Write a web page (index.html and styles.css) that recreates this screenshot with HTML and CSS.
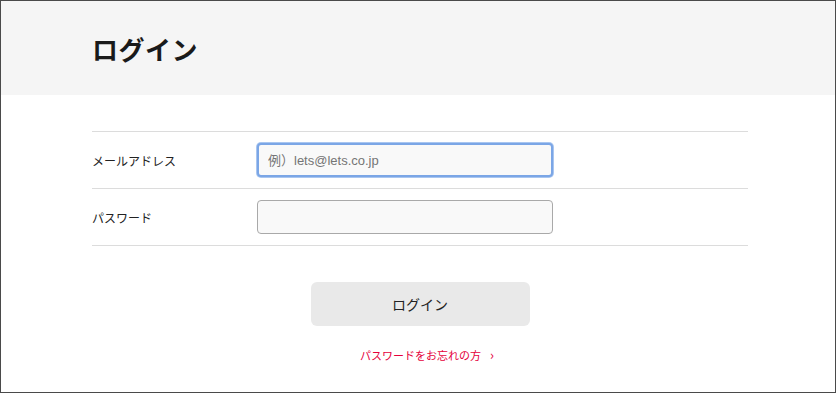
FILE: index.html
```html
<!DOCTYPE html>
<html lang="ja">
<head>
    <meta charset="UTF-8">
    <meta name="viewport" content="width=device-width, initial-scale=1.0">
    <title>ログイン</title>
    <link rel="stylesheet" href="styles.css">
</head>
<body>
    <div class="frame">
        <div class="page-head">
            <h1 class="page-title">ログイン</h1>
        </div>

        <form class="login">
            <div class="row">
                <label class="label" for="mail">メールアドレス</label>
                <input class="field is-focus" type="text" id="mail" placeholder="例）lets@lets.co.jp">
            </div>
            <div class="row">
                <label class="label" for="pass">パスワード</label>
                <input class="field" type="password" id="pass">
            </div>

            <div class="actions">
                <button type="button" class="btn-login">ログイン</button>
                <a class="forgot" href="#">パスワードをお忘れの方<span class="chev">›</span></a>
            </div>
        </form>
    </div>
</body>
</html>
```

FILE: styles.css
```css
html, body
{
    margin: 0;
    padding: 0;
}
body
{
    font-family: "Liberation Sans", "Noto Sans CJK JP", sans-serif;
    color: #222;
    background-color: #fff;
}
.frame
{
    box-sizing: border-box;
    width: 836px;
    height: 393px;
    border: 1px solid #4a4a4a;
    overflow: hidden;
}

/* 見出し */
.page-head
{
    background-color: #f5f5f5;
    height: 94px;
    padding-left: 91px;
    display: flex;
    align-items: center;
}
.page-title
{
    margin: 0;
    font-family: "Noto Sans CJK JP", sans-serif;
    font-size: 26px;
    font-weight: 700;
    color: #1a1a1a;
    letter-spacing: 0.5px;
}

/* フォーム */
.login
{
    width: 656px;
    margin: 36px 0 0 91px;
    border-top: 1px solid #dcdcdc;
}
.row
{
    display: flex;
    align-items: center;
    height: 56px;
    border-bottom: 1px solid #dcdcdc;
}
.label
{
    width: 165px;
    font-family: "Noto Sans CJK JP", sans-serif;
    font-size: 12px;
    color: #222;
}
.field
{
    box-sizing: border-box;
    width: 296px;
    height: 34px;
    padding: 0 10px;
    border: 1px solid #a9a9a9;
    border-radius: 4px;
    background-color: #f9f9f9;
    font-family: "Liberation Sans", "Noto Sans CJK JP", sans-serif;
    font-size: 13px;
    color: #222;
    outline: none;
}
.field::placeholder
{
    color: #757575;
}
.field.is-focus
{
    border: 2px solid #7ba6e6;
    box-shadow: 0 0 0 1px #a9c6f0;
    padding-left: 9px;
}

.actions
{
    display: flex;
    flex-direction: column;
    align-items: center;
    padding-top: 36px;
}
.btn-login
{
    width: 219px;
    height: 44px;
    border: none;
    border-radius: 6px;
    background-color: #e9e9e9;
    font-family: "Noto Sans CJK JP", sans-serif;
    font-size: 14px;
    color: #222;
}
.forgot
{
    margin-top: 19px;
    margin-left: 14px;
    font-family: "Noto Sans CJK JP", sans-serif;
    font-size: 11px;
    color: #e5003b;
    text-decoration: none;
}
.forgot .chev
{
    margin-left: 9px;
    font-size: 13px;
}
```
